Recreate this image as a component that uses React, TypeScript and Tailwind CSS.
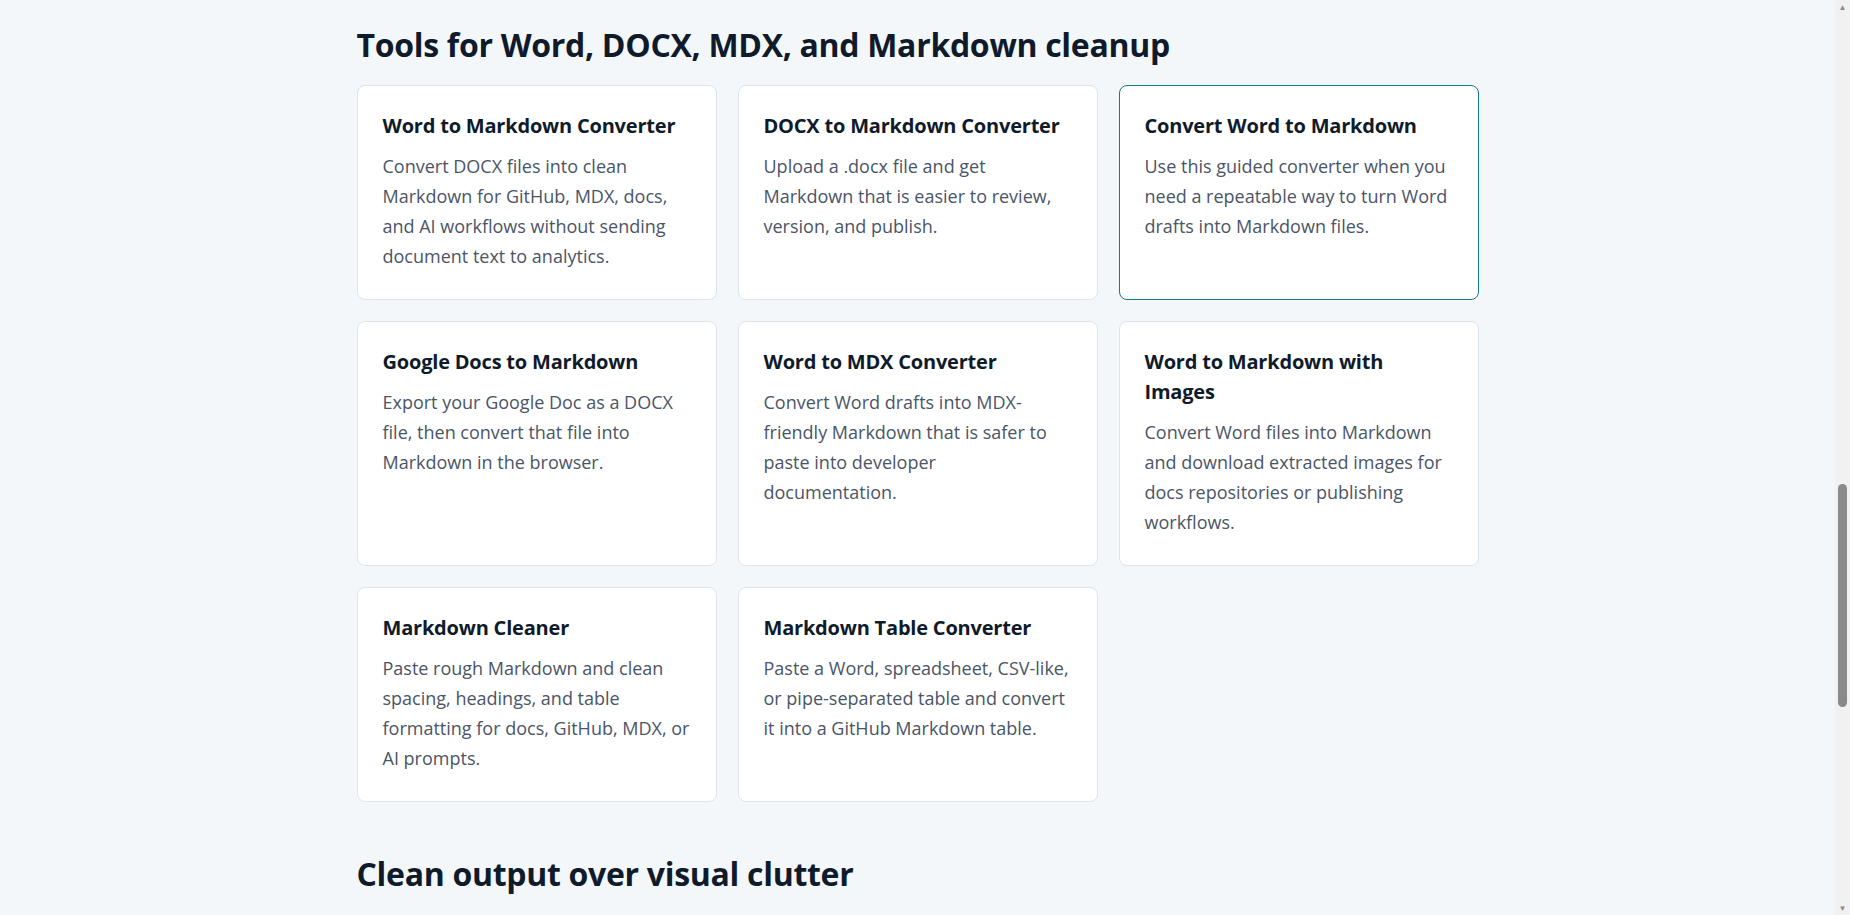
const cards = [
  { t: 'Word to Markdown Converter', d: 'Convert DOCX files into clean Markdown for GitHub, MDX, docs, and AI workflows without sending document text to analytics.' },
  { t: 'DOCX to Markdown Converter', d: 'Upload a .docx file and get Markdown that is easier to review, version, and publish.' },
  { t: 'Convert Word to Markdown', d: 'Use this guided converter when you need a repeatable way to turn Word drafts into Markdown files.', active: true },
  { t: 'Google Docs to Markdown', d: 'Export your Google Doc as a DOCX file, then convert that file into Markdown in the browser.' },
  { t: 'Word to MDX Converter', d: 'Convert Word drafts into MDX-friendly Markdown that is safer to paste into developer documentation.' },
  { t: 'Word to Markdown with Images', d: 'Convert Word files into Markdown and download extracted images for docs repositories or publishing workflows.' },
  { t: 'Markdown Cleaner', d: 'Paste rough Markdown and clean spacing, headings, and table formatting for docs, GitHub, MDX, or AI prompts.' },
  { t: 'Markdown Table Converter', d: 'Paste a Word, spreadsheet, CSV-like, or pipe-separated table and convert it into a GitHub Markdown table.' },
];

export default function App() {
  return (
    <div className="flex h-[915px] overflow-hidden bg-[#f4f7fa] text-[#0f1b2a]" style={{ fontFamily: '"Open Sans", "Noto Sans", sans-serif' }}>
      <div className="flex-1 overflow-hidden">
        <div className="mx-auto w-[1122px] pt-[24px]">
          <h2 className="text-[32px] font-bold tracking-[-0.3px] leading-[42px]">Tools for Word, DOCX, MDX, and Markdown cleanup</h2>
          <div className="mt-[19px] grid grid-cols-3 gap-[21px]">
            {cards.map((c) => (
              <div
                key={c.t}
                className={
                  'rounded-[8px] border bg-white px-[25px] pt-[25px] pb-[28px] ' +
                  (c.active ? 'border-[#127a8c]' : 'border-[#dde5ec]')
                }
              >
                <h3 className="text-[20px] font-bold leading-[30px] tracking-[-0.2px]">{c.t}</h3>
                <p className="mt-[10px] text-[18px] leading-[30px] text-[#4a5567]">{c.d}</p>
              </div>
            ))}
          </div>
          <h2 className="mt-[51px] text-[32px] font-bold tracking-[-0.3px] leading-[42px]">Clean output over visual clutter</h2>
          <p className="mt-[22px] text-[19px] leading-[30px] text-[#334155]">
            Word stores formatting for pages and editors. Markdown is better when it keeps structure: headings, paragraphs, lists, links, and tables.
          </p>
        </div>
      </div>
      <div className="flex w-[15px] flex-col items-center bg-[#f1f1f1]">
        <div className="mt-[2px] text-[8px] leading-[10px] text-[#8a8a8a]">▲</div>
        <div className="mt-[472px] h-[223px] w-[9px] rounded-full bg-[#8a8a8a]" />
        <div className="mt-auto mb-[2px] text-[8px] leading-[10px] text-[#8a8a8a]">▼</div>
      </div>
    </div>
  );
}
